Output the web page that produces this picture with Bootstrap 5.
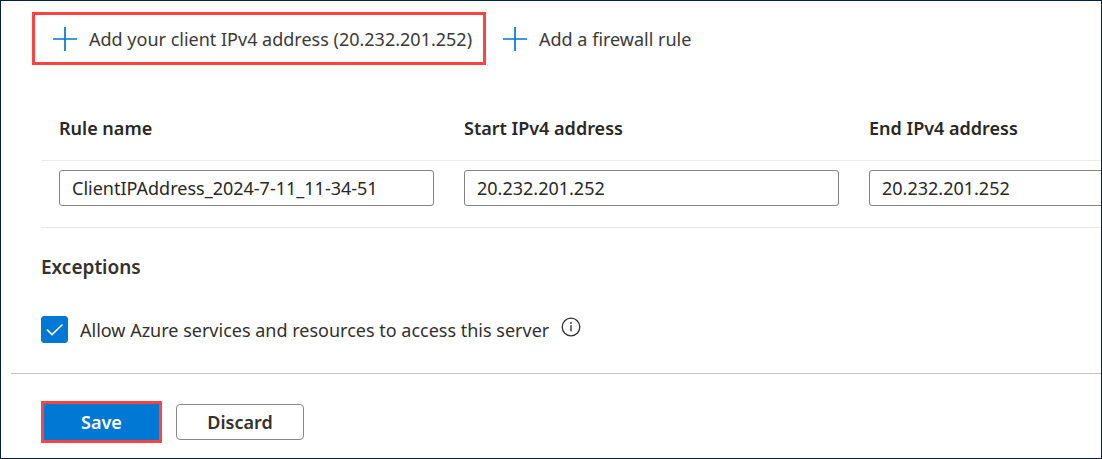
<!DOCTYPE html>
<html lang="en">
<head>
<meta charset="utf-8">
<meta name="viewport" content="width=device-width, initial-scale=1">
<title>Firewall rules</title>
<link href="https://cdn.jsdelivr.net/npm/bootstrap@5.3.0/dist/css/bootstrap.min.css" rel="stylesheet">
<style>
  body { font-family: "Noto Sans", "Open Sans", sans-serif; font-size: 18px; line-height: 28px; color: #323130; }
  .blade { border: 1px solid #06203f; overflow-x: hidden; }
  .commands { padding: 11px 31px 0; gap: 17px; }
  .command { gap: 12px; padding: 0; border: 0; background: none; color: #3b3a39; white-space: nowrap; }
  .command.marked { border: 3px solid #ff4343; padding: 10px 11px 9px 18px; height: 53px; }
  .command svg { flex: none; }
  .rules-wrap { margin: 31px 0 0 40px; overflow-x: hidden; }
  .rules { table-layout: fixed; width: 1215px; border-collapse: separate; border-spacing: 0; }
  .rules th { font-weight: 600; padding: 18px 12px 18px 18px; border-bottom: 1px solid #edebe9; color: #292827; }
  .rules td { padding: 9px 12px 21px 18px; border-bottom: 1px solid #e8e8e8; }
  .rules .form-control { height: 36px; padding: 0 12px; border: 1px solid #858381; border-radius: 3px; font-size: 18px; line-height: 28px; color: #292827; }
  .exceptions { padding: 25px 40px 30px; }
  .exceptions h2 { font-size: 19px; line-height: 28px; font-weight: 600; margin: 0 0 35px; }
  .allow { gap: 12px; height: 27px; }
  .allow .form-check-input { flex: none; width: 27px; height: 27px; margin: 0; border-radius: 3px; }
  .allow .form-check-input:checked { background-color: #0078d4; border-color: #0078d4; background-size: 27px 27px;
    background-image: url("data:image/svg+xml,%3Csvg xmlns='http://www.w3.org/2000/svg' viewBox='0 0 27 27'%3E%3Cpath d='M6 13.6l5 5L21.5 8.5' fill='none' stroke='%23fff' stroke-width='1.5'/%3E%3C/svg%3E"); }
  .info { margin-bottom: 6px; padding: 0; border: 0; background: none; line-height: 0; color: #323130; }
  .footer-bar { margin-left: 10px; padding: 27px 30px 15px; gap: 14px; border-top: 1px solid #c8c6c4; }
  .footer-bar .btn { font-size: 18px; line-height: 28px; font-weight: 600; padding: 0; }
  .btn-save { width: 121px; height: 42px; border: 3px solid #ff4343; border-radius: 0; background: #0078d4; color: #fff; }
  .btn-discard { width: 128px; height: 36px; border: 1px solid #8a8886; border-radius: 4px; background: #fff; color: #323130; }
</style>
</head>
<body>
<main class="blade min-vh-100 bg-white">
  <div class="commands d-flex align-items-center">
    <button type="button" class="command marked d-flex align-items-center">
      <svg width="24" height="24" viewBox="0 0 24 24" aria-hidden="true"><path d="M12 0v24M0 12h24" stroke="#0078d4" stroke-width="1.7"/></svg>
      <span>Add your client IPv4 address (20.232.201.252)</span>
    </button>
    <button type="button" class="command d-flex align-items-center">
      <svg width="24" height="24" viewBox="0 0 24 24" aria-hidden="true"><path d="M12 0v24M0 12h24" stroke="#0078d4" stroke-width="1.7"/></svg>
      <span>Add a firewall rule</span>
    </button>
  </div>

  <div class="rules-wrap">
    <table class="rules">
      <thead>
        <tr><th scope="col" id="c1">Rule name</th><th scope="col" id="c2">Start IPv4 address</th><th scope="col" id="c3">End IPv4 address</th></tr>
      </thead>
      <tbody>
        <tr>
          <td><input type="text" class="form-control" aria-labelledby="c1" value="ClientIPAddress_2024-7-11_11-34-51"></td>
          <td><input type="text" class="form-control" aria-labelledby="c2" value="20.232.201.252"></td>
          <td><input type="text" class="form-control" aria-labelledby="c3" value="20.232.201.252"></td>
        </tr>
      </tbody>
    </table>
  </div>

  <section class="exceptions">
    <h2>Exceptions</h2>
    <div class="allow d-flex align-items-center">
      <input class="form-check-input" type="checkbox" id="allow" checked>
      <label for="allow">Allow Azure services and resources to access this server</label>
      <button type="button" class="info" aria-label="More information">
        <svg width="20" height="20" viewBox="0 0 20 20" aria-hidden="true"><circle cx="10" cy="10" r="8.8" fill="none" stroke="currentColor" stroke-width="1.3"/><path d="M10 8.3v6" stroke="currentColor" stroke-width="1.4"/><circle cx="10" cy="6" r=".9" fill="currentColor"/></svg>
      </button>
    </div>
  </section>

  <div class="footer-bar d-flex align-items-center">
    <button type="button" class="btn btn-save">Save</button>
    <button type="button" class="btn btn-discard">Discard</button>
  </div>
</main>
<script src="https://cdn.jsdelivr.net/npm/bootstrap@5.3.0/dist/js/bootstrap.bundle.min.js"></script>
</body>
</html>
